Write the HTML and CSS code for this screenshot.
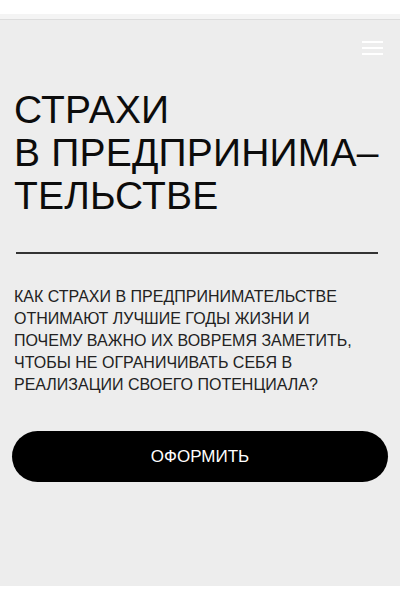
FILE: index.html
```html
<!DOCTYPE html>
<html lang="ru">
<head>
    <meta charset="UTF-8">
    <meta name="viewport" content="width=device-width, initial-scale=1.0">
    <title>Страхи в предпринимательстве</title>
    <link rel="stylesheet" href="styles.css">
</head>
<body>
    <div class="topbar"></div>
    <section class="hero">
        <header class="hero-header">
            <button class="menu-btn" type="button" aria-label="Меню">
                <svg width="21" height="14" viewBox="0 0 21 14">
                    <rect x="0" y="0" width="21" height="2" fill="#fff"/>
                    <rect x="0" y="6" width="21" height="2" fill="#fff"/>
                    <rect x="0" y="12" width="21" height="2" fill="#fff"/>
                </svg>
            </button>
        </header>

        <h1 class="hero-title">СТРАХИ<br>В ПРЕДПРИНИМА&ndash;<br>ТЕЛЬСТВЕ</h1>
        <hr class="hero-line">

        <p class="hero-text">
            КАК СТРАХИ В ПРЕДПРИНИМАТЕЛЬСТВЕ<br>
            ОТНИМАЮТ ЛУЧШИЕ ГОДЫ ЖИЗНИ И<br>
            ПОЧЕМУ ВАЖНО ИХ ВОВРЕМЯ ЗАМЕТИТЬ,<br>
            ЧТОБЫ НЕ ОГРАНИЧИВАТЬ СЕБЯ В<br>
            РЕАЛИЗАЦИИ СВОЕГО ПОТЕНЦИАЛА?
        </p>

        <button class="order-btn" type="button">ОФОРМИТЬ</button>
    </section>
</body>
</html>
```

FILE: styles.css
```css
body {
    margin: 0;
    background: #fff;
    font-family: "Liberation Sans", Arial, sans-serif;
    color: #111;
}

.topbar {
    height: 5px;
    margin-top: 14px;
    background: #f4f4f4;
    border-bottom: 1px solid #dcdcdc;
}

.hero {
    height: 566px;
    box-sizing: border-box;
    padding: 0 12px;
    background: #ededed;
    overflow: hidden;
}

.hero-header {
    display: flex;
    justify-content: flex-end;
    padding: 21px 5px 0 0;
}

.menu-btn {
    display: block;
    padding: 0;
    border: none;
    background: none;
    line-height: 0;
    cursor: pointer;
}

.hero-title {
    margin: 33px 0 0 2px;
    font-size: 39px;
    font-weight: 400;
    line-height: 43px;
    letter-spacing: 0.2px;
    color: #0c0c0c;
}

.hero-line {
    margin: 35px 10px 0 4px;
    border: none;
    border-top: 2px solid #333;
}

.hero-text {
    margin: 32px 0 0 2px;
    font-size: 16px;
    line-height: 22px;
    color: #222;
}

.order-btn {
    display: block;
    width: 100%;
    height: 51px;
    margin-top: 35px;
    border: none;
    border-radius: 26px;
    background: #000;
    color: #fff;
    font-family: inherit;
    font-size: 17px;
    cursor: pointer;
}
```
